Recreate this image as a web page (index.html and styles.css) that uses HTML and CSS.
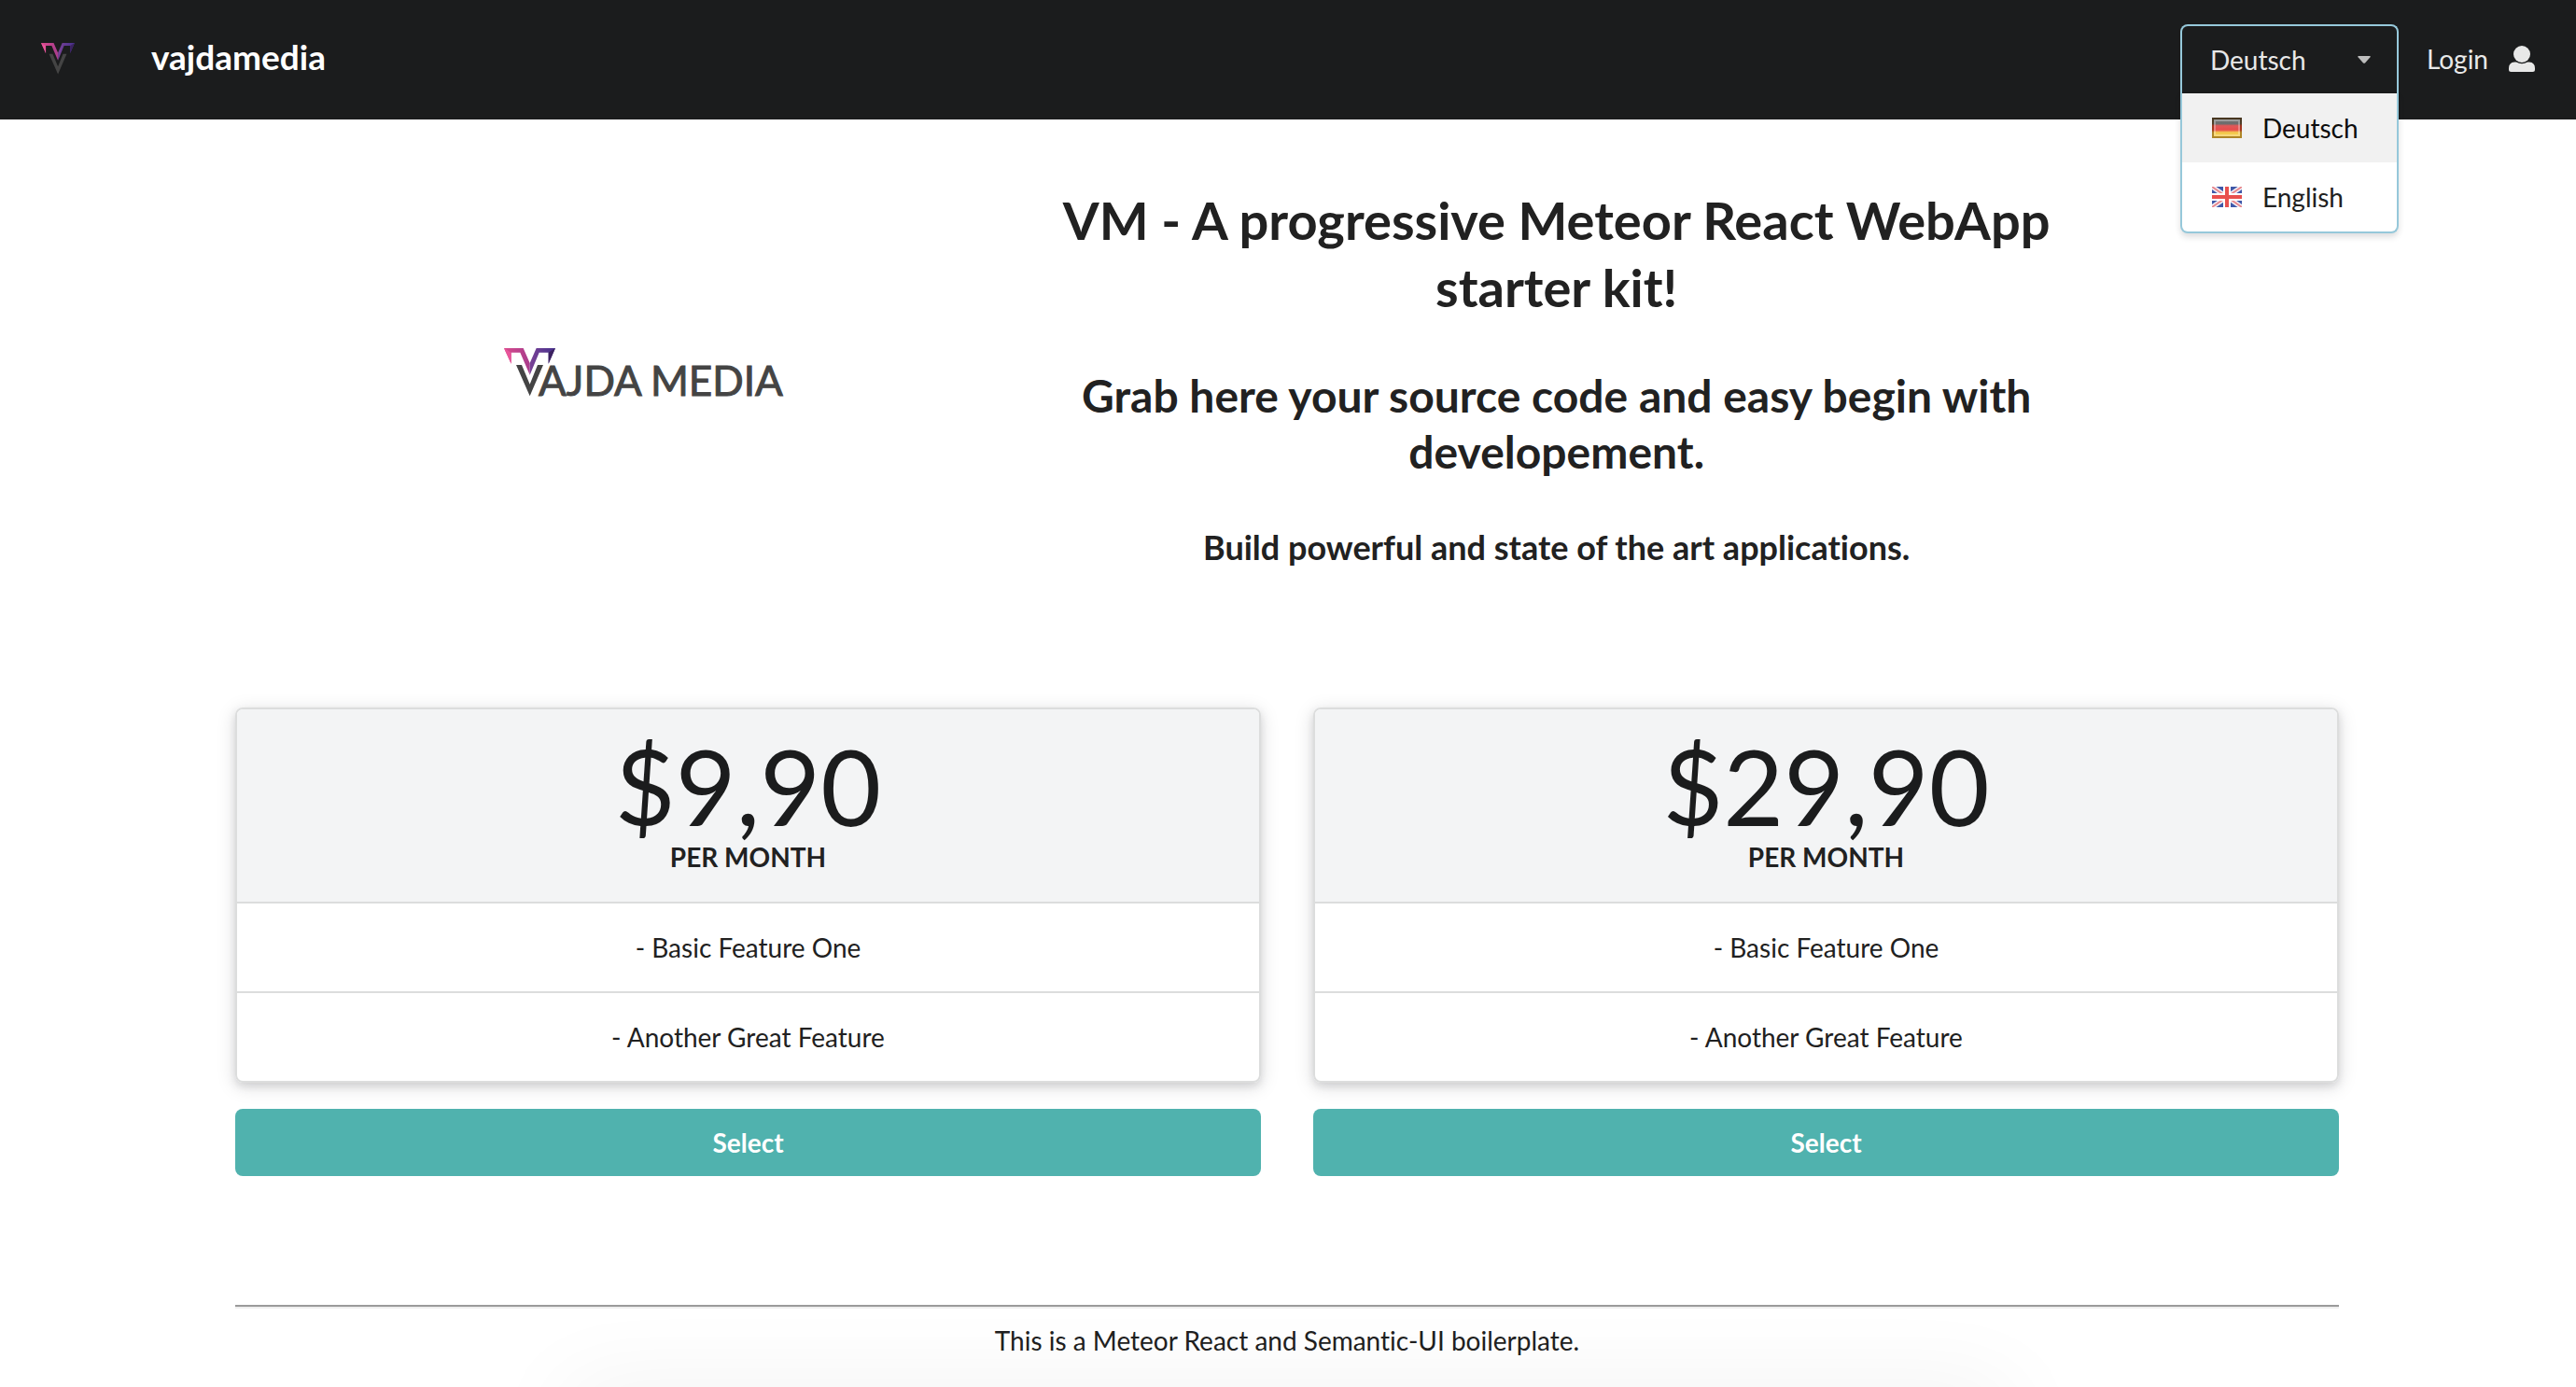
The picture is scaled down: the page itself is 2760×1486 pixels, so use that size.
FILE: index.html
```html
<!DOCTYPE html>
<html lang="en">
<head>
<meta charset="utf-8">
<title>vajdamedia</title>
<link rel="stylesheet" href="styles.css">
</head>
<body>
<svg class="defs" aria-hidden="true">
  <defs>
    <linearGradient id="mark-left" x1="0" x2="1"><stop offset="0" stop-color="#d94a8c"/><stop offset="1" stop-color="#a83c8c"/></linearGradient>
    <linearGradient id="mark-right" x1="0" x2="1"><stop offset="0" stop-color="#7a4296"/><stop offset="1" stop-color="#45308c"/></linearGradient>
    <symbol id="mark" viewBox="0 0 165 156">
      <path fill="url(#mark-left)" d="M0 0H62L83 48V86L52 14H23V50Z"/>
      <path fill="url(#mark-right)" d="M165 0H104L83 48V86L113 14H143V50Z"/>
      <path fill="#e8559a" d="M0 0L23 14V50Z"/>
      <path fill="#3c2260" d="M165 0L143 14V50Z"/>
      <path fill="#444" d="M39 54H57L83 116L108 54H126L83 154Z"/>
    </symbol>
    <linearGradient id="gloss" x1="0" y1="0" x2="0" y2="1"><stop offset="0" stop-color="#fff" stop-opacity=".35"/><stop offset="1" stop-color="#fff" stop-opacity=".1"/></linearGradient>
    <linearGradient id="german" x1="0" y1="0" x2="0" y2="1"><stop offset="0" stop-color="#222"/><stop offset=".3" stop-color="#333"/><stop offset=".4" stop-color="#d81e1e"/><stop offset=".6" stop-color="#e02222"/><stop offset=".72" stop-color="#f2c230"/><stop offset="1" stop-color="#f2c230"/></linearGradient>
  </defs>
</svg>
<header class="topbar">
  <a class="brand" href="#">
    <svg class="brand-mark" role="img" aria-label="Vajda Media"><use href="#mark"/></svg>
    <span class="brand-name">vajdamedia</span>
  </a>
  <nav class="tools">
    <div class="language">
      <button class="language-toggle" type="button" aria-haspopup="listbox" aria-expanded="true">
        <span>Deutsch</span>
        <svg class="caret" viewBox="0 0 14 8" aria-hidden="true"><path fill="#bdbdbd" d="M1 0H13Q14.500 0 13.500 1.300L8 7.400Q7 8.300 6 7.400L.5 1.300Q-.5 0 1 0Z"/></svg>
      </button>
      <div class="language-menu" role="listbox" aria-label="Language">
        <button class="language-option is-selected" type="button" role="option" aria-selected="true">
          <svg class="flag" viewBox="0 0 32 22" aria-hidden="true">
            <path fill="url(#german)" d="M0 0H32V22H0Z"/>
            <path fill="url(#gloss)" d="M2 2H30V20H2Z"/><path fill="none" stroke="#6b4a1e" stroke-opacity=".5" stroke-width="2" d="M1 1H31V21H1Z"/><path fill="none" stroke="#fff" stroke-opacity=".3" stroke-width="2" d="M3 3H29V19H3Z"/>
          </svg>
          <span>Deutsch</span>
        </button>
        <button class="language-option" type="button" role="option" aria-selected="false">
          <svg class="flag" viewBox="0 0 32 22" aria-hidden="true">
            <path fill="#3f58a8" d="M0 0H32V22H0Z"/>
            <path stroke="#f4f4fa" stroke-width="5" d="M0 0L32 22M32 0L0 22"/>
            <path stroke="#e88a90" stroke-width="2" d="M0 0L32 22M32 0L0 22"/>
            <path stroke="#fff" stroke-width="8" d="M16 0V22M0 11H32"/>
            <path stroke="#e8504e" stroke-width="4" d="M16 0V22M0 11H32"/>
          </svg>
          <span>English</span>
        </button>
      </div>
    </div>
    <a class="login" href="#">
      <span>Login</span>
      <svg class="user" viewBox="0 0 28 28" aria-hidden="true"><ellipse cx="14" cy="9" rx="9" ry="9"/><path d="M6 17.500H8Q14 21 20 17.500H22Q28 18 28 24V25.500Q28 28 25.500 28H2.500Q0 28 0 25.500V24Q0 18 6 17.500Z"/></svg>
    </a>
  </nav>
</header>
<main class="container">
  <section class="hero">
    <svg class="logo" viewBox="0 0 302 64" role="img" aria-label="Vajda Media">
      <use href="#mark" width="55" height="52"/>
      <text x="37" y="51">AJDA</text>
      <text x="157" y="51">MEDIA</text>
    </svg>
    <div class="hero-text">
      <h1>VM - A progressive Meteor React WebApp starter kit!</h1>
      <h2>Grab here your source code and easy begin with developement.</h2>
      <h3>Build powerful and state of the art applications.</h3>
    </div>
  </section>
  <section class="plans">
    <article class="plan">
      <div class="card">
        <header class="card-head"><p class="price">$9,90</p><p class="period">PER MONTH</p></header>
        <p class="feature">- Basic Feature One</p>
        <p class="feature">- Another Great Feature</p>
      </div>
      <button class="select" type="button">Select</button>
    </article>
    <article class="plan">
      <div class="card">
        <header class="card-head"><p class="price">$29,90</p><p class="period">PER MONTH</p></header>
        <p class="feature">- Basic Feature One</p>
        <p class="feature">- Another Great Feature</p>
      </div>
      <button class="select" type="button">Select</button>
    </article>
  </section>
  <footer class="footer">This is a Meteor React and Semantic-UI boilerplate.</footer>
</main>
<div class="bottom-glow" aria-hidden="true"></div>
</body>
</html>
```
FILE: styles.css
```css
* { box-sizing: border-box; }
body {
  margin: 0;
  background: #fff;
  color: #212121;
  font: 28px/40px Lato, "Open Sans", sans-serif;
  font-variant-ligatures: no-common-ligatures;
}
h1, h2, h3, p { margin: 0; }
button { font: inherit; font-variant-ligatures: inherit; color: inherit; border: 0; background: none; cursor: pointer; }
a { color: inherit; text-decoration: none; }
.defs { position: absolute; width: 0; height: 0; }

.topbar {
  display: flex;
  justify-content: space-between;
  align-items: center;
  height: 128px;
  padding: 0 44px;
  background: #1b1c1d;
  color: #e8e8e8;
}
.brand { display: flex; align-items: center; gap: 82px; padding-bottom: 2px; }
.brand-mark { width: 36px; height: 34px; }
.brand-name { padding-bottom: 4px; font-size: 37px; font-weight: 700; color: #fff; }
.tools { display: flex; align-items: center; gap: 30px; padding-bottom: 2px; }
.language { position: relative; width: 234px; }
.language-toggle {
  display: flex;
  justify-content: space-between;
  align-items: center;
  width: 100%;
  height: 74px;
  padding: 0 28px 0 30px;
  border: 2px solid #96c8da;
  border-bottom: 0;
  border-radius: 8px 8px 0 0;
}
.caret { width: 14px; height: 8px; }
.language-menu {
  position: absolute;
  top: 100%;
  left: 0;
  width: 100%;
  background: #fff;
  color: #212121;
  border: 2px solid #96c8da;
  border-top: 0;
  border-radius: 0 0 8px 8px;
  box-shadow: 0 4px 6px rgba(34, 36, 38, .15);
}
.language-option {
  display: flex;
  align-items: center;
  gap: 22px;
  width: 100%;
  height: 74px;
  padding: 0 32px;
}
.language-option.is-selected { background: #f1f1f1; color: #0d0d0d; }
.flag { width: 32px; height: 22px; }
.login { display: flex; align-items: center; gap: 22px; }
.user { width: 28px; height: 28px; fill: #e8e8e8; }

.container { width: calc(100% - 504px); max-width: 2256px; margin: 0 auto; padding-right: 2px; }
.hero {
  display: grid;
  grid-template-columns: 3fr 4fr;
  align-items: center;
  justify-items: center;
  padding: 72px 280px 0 20px;
}
.logo { width: 302px; height: 64px; }
.logo text { font: 44px Lato, sans-serif; fill: #444; stroke: #444; stroke-width: 1px; }
.hero-text { text-align: center; }
h1 { font-size: 56px; line-height: 72px; }
h2 { margin-top: 50px; font-size: 48px; line-height: 60px; }
h3 { margin-top: 48px; font-size: 36px; line-height: 48px; }

.plans { display: grid; grid-template-columns: 1fr 1fr; gap: 56px; margin-top: 148px; }
.card {
  border: 2px solid #dcdddd;
  border-radius: 8px;
  text-align: center;
  box-shadow: 0 4px 8px rgba(34, 36, 38, .12), 0 4px 20px rgba(34, 36, 38, .15);
}
.card-head { height: 206px; padding-top: 26px; background: #f3f4f5; border-radius: 6px 6px 0 0; }
.price { font-size: 112px; line-height: 112px; color: #1b1c1d; }
.period { font-weight: 700; line-height: 40px; }
.feature { padding: 27px 0; border-top: 2px solid #dcdddd; }
.select {
  width: 100%;
  height: 72px;
  margin-top: 28px;
  border-radius: 8px;
  background: #50b2ae;
  color: #fff;
  font-weight: 700;
}
.footer {
  margin-top: 138px;
  padding-top: 16px;
  border-top: 2px solid #9a9a9a;
  box-shadow: inset 0 2px #eee;
  text-align: center;
}
.bottom-glow {
  position: fixed;
  left: 22%;
  right: 22%;
  top: 100%;
  height: 80px;
  box-shadow: 0 0 100px rgba(0, 0, 0, .06);
}
```
